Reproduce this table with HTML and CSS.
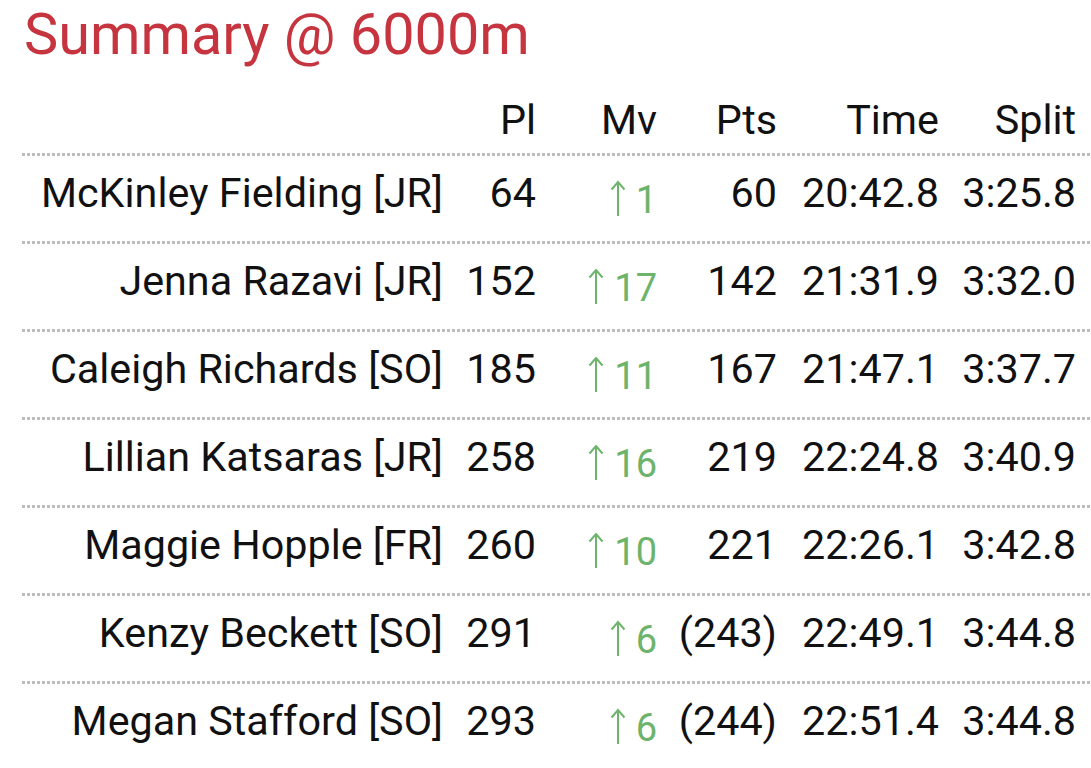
FILE: index.html
```html
<!DOCTYPE html>
<html lang="en">
<head>
<meta charset="utf-8">
<title>Summary @ 6000m</title>
<link rel="stylesheet" href="styles.css">
</head>
<body>
<main class="summary">
  <h1 class="title">Summary @ 6000m</h1>
  <div class="table">
    <div class="row head">
      <span class="c name"></span>
      <span class="c">Pl</span>
      <span class="c">Mv</span>
      <span class="c">Pts</span>
      <span class="c">Time</span>
      <span class="c">Split</span>
    </div>
    <div class="row">
      <span class="c name">McKinley Fielding [JR]</span>
      <span class="c">64</span>
      <span class="c mv"><svg class="arrow" viewBox="0 0 16 36"><path d="M8 2V36M1.5 9.5L8 2L14.5 9.5"/></svg><span class="mvn">1</span></span>
      <span class="c">60</span>
      <span class="c">20:42.8</span>
      <span class="c">3:25.8</span>
    </div>
    <div class="row">
      <span class="c name">Jenna Razavi [JR]</span>
      <span class="c">152</span>
      <span class="c mv"><svg class="arrow" viewBox="0 0 16 36"><path d="M8 2V36M1.5 9.5L8 2L14.5 9.5"/></svg><span class="mvn">17</span></span>
      <span class="c">142</span>
      <span class="c">21:31.9</span>
      <span class="c">3:32.0</span>
    </div>
    <div class="row">
      <span class="c name">Caleigh Richards [SO]</span>
      <span class="c">185</span>
      <span class="c mv"><svg class="arrow" viewBox="0 0 16 36"><path d="M8 2V36M1.5 9.5L8 2L14.5 9.5"/></svg><span class="mvn">11</span></span>
      <span class="c">167</span>
      <span class="c">21:47.1</span>
      <span class="c">3:37.7</span>
    </div>
    <div class="row">
      <span class="c name">Lillian Katsaras [JR]</span>
      <span class="c">258</span>
      <span class="c mv"><svg class="arrow" viewBox="0 0 16 36"><path d="M8 2V36M1.5 9.5L8 2L14.5 9.5"/></svg><span class="mvn">16</span></span>
      <span class="c">219</span>
      <span class="c">22:24.8</span>
      <span class="c">3:40.9</span>
    </div>
    <div class="row">
      <span class="c name">Maggie Hopple [FR]</span>
      <span class="c">260</span>
      <span class="c mv"><svg class="arrow" viewBox="0 0 16 36"><path d="M8 2V36M1.5 9.5L8 2L14.5 9.5"/></svg><span class="mvn">10</span></span>
      <span class="c">221</span>
      <span class="c">22:26.1</span>
      <span class="c">3:42.8</span>
    </div>
    <div class="row">
      <span class="c name">Kenzy Beckett [SO]</span>
      <span class="c">291</span>
      <span class="c mv"><svg class="arrow" viewBox="0 0 16 36"><path d="M8 2V36M1.5 9.5L8 2L14.5 9.5"/></svg><span class="mvn">6</span></span>
      <span class="c">(243)</span>
      <span class="c">22:49.1</span>
      <span class="c">3:44.8</span>
    </div>
    <div class="row">
      <span class="c name">Megan Stafford [SO]</span>
      <span class="c">293</span>
      <span class="c mv"><svg class="arrow" viewBox="0 0 16 36"><path d="M8 2V36M1.5 9.5L8 2L14.5 9.5"/></svg><span class="mvn">6</span></span>
      <span class="c">(244)</span>
      <span class="c">22:51.4</span>
      <span class="c">3:44.8</span>
    </div>
  </div>
</main>
</body>
</html>
```

FILE: styles.css
```css
html, body {
  margin: 0;
  padding: 0;
  background: #ffffff;
}

body {
  font-family: Roboto, "Noto Sans", "Liberation Sans", sans-serif;
  color: #111111;
  width: 1091px;
  height: 768px;
  overflow: hidden;
}

.summary {
  padding-left: 22px;
}

.title {
  margin: 6px 0 0 0;
  font-size: 57.6px;
  line-height: 58px;
  font-weight: 400;
  color: #c6353f;
  padding-left: 2px;
}

.table {
  margin-top: 32px;
}

.row {
  display: grid;
  grid-template-columns: 421px 93px 121px 120px 162px 137px;
  padding-right: 15px;
  font-size: 41.3px;
  line-height: 48px;
  padding-top: 16px;
  height: 88px;
  box-sizing: border-box;
  background-image: linear-gradient(to right, #bdbdbd 3px, transparent 3px);
  background-size: 5px 3px;
  background-repeat: repeat-x;
  background-position: 0 0;
}

.row.head {
  background: none;
  padding-top: 0;
  height: 57px;
}

.c {
  text-align: right;
  white-space: nowrap;
}

.mv {
  color: #6cb36c;
}

.arrow {
  width: 16px;
  height: 36px;
  vertical-align: -9px;
  fill: none;
  stroke: #6cb36c;
  stroke-width: 2;
}

.mvn {
  font-size: 38px;
  margin-left: 10px;
  vertical-align: -6px;
}
```
